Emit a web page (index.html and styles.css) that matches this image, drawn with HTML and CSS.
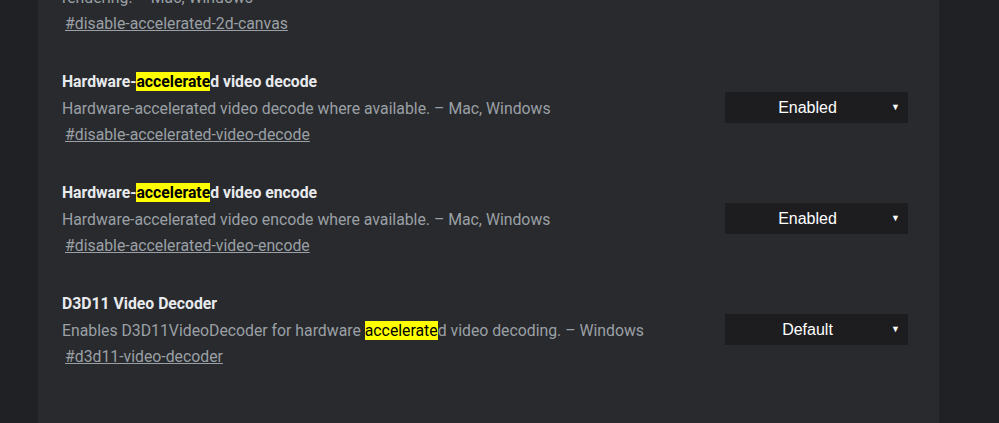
FILE: index.html
```html
<!DOCTYPE html>
<html lang="en">
<head>
    <meta charset="UTF-8">
    <title>Experiments</title>
    <link rel="stylesheet" href="styles.css">
</head>
<body>

<div class="page">
    <div class="side"></div>

    <!-- Daftar Eksperimen -->
    <div class="content">
        <div class="experiment first">
            <div class="experiment-text">
                <h3 class="title">Accelerated 2D canvas</h3>
                <p class="desc">Enables the use of the GPU to perform 2d canvas rendering instead of using software rendering. – Mac, Windows</p>
                <a class="link" href="#disable-accelerated-2d-canvas">#disable-accelerated-2d-canvas</a>
            </div>
        </div>

        <div class="experiment">
            <div class="experiment-text">
                <h3 class="title">Hardware-<mark>accelerate</mark>d video decode</h3>
                <p class="desc">Hardware-accelerated video decode where available. – Mac, Windows</p>
                <a class="link" href="#disable-accelerated-video-decode">#disable-accelerated-video-decode</a>
            </div>
            <div class="select">Enabled<span class="arrow">&#9660;</span></div>
        </div>

        <div class="experiment">
            <div class="experiment-text">
                <h3 class="title">Hardware-<mark>accelerate</mark>d video encode</h3>
                <p class="desc">Hardware-accelerated video encode where available. – Mac, Windows</p>
                <a class="link" href="#disable-accelerated-video-encode">#disable-accelerated-video-encode</a>
            </div>
            <div class="select">Enabled<span class="arrow">&#9660;</span></div>
        </div>

        <div class="experiment">
            <div class="experiment-text">
                <h3 class="title">D3D11 Video Decoder</h3>
                <p class="desc">Enables D3D11VideoDecoder for hardware <mark>accelerate</mark>d video decoding. – Windows</p>
                <a class="link" href="#d3d11-video-decoder">#d3d11-video-decoder</a>
            </div>
            <div class="select">Default<span class="arrow">&#9660;</span></div>
        </div>
    </div>

    <div class="side"></div>
</div>

</body>
</html>
```

FILE: styles.css
```css
/* Desain Dasar */
body {
    font-family: Roboto, Arial, sans-serif;
    margin: 0;
    padding: 0;
    background-color: #202124;
    overflow: hidden;
}

.page {
    display: flex;
    height: 423px;
}

.side {
    width: 38px;
    background-color: #202124;
}

.side:last-child {
    width: 60px;
}

/* Panel Tengah */
.content {
    width: 901px;
    background-color: #292a2d;
    padding: 0 31px 0 24px;
    box-sizing: border-box;
    overflow: hidden;
}

.experiment {
    display: flex;
    align-items: flex-start;
    justify-content: space-between;
    margin-bottom: 31px;
}

.experiment.first {
    margin-top: -69px;
}

.experiment.first .experiment-text {
    max-width: 660px;
}

.experiment-text {
    display: flex;
    flex-direction: column;
    align-items: flex-start;
}

.title {
    margin: 0;
    padding-top: 1px;
    font-size: 15.75px;
    font-weight: bold;
    line-height: 26px;
    color: #e8eaed;
}

.desc {
    margin: 1px 0 0;
    font-size: 15.8px;
    line-height: 26px;
    color: #9aa0a6;
}

.link {
    font-size: 15.8px;
    line-height: 26px;
    color: #9aa0a6;
    padding-left: 3px;
}

mark {
    background-color: #ffff00;
    color: #000;
}

/* Dropdown */
.select {
    position: relative;
    width: 183px;
    height: 31px;
    margin-top: 24px;
    line-height: 31px;
    background-color: #1d1d1f;
    color: #fff;
    font-family: Arial, sans-serif;
    font-size: 16px;
    text-align: center;
    box-sizing: border-box;
    padding-right: 18px;
}

.select .arrow {
    position: absolute;
    right: 8px;
    top: 0;
    font-size: 9px;
}
```
